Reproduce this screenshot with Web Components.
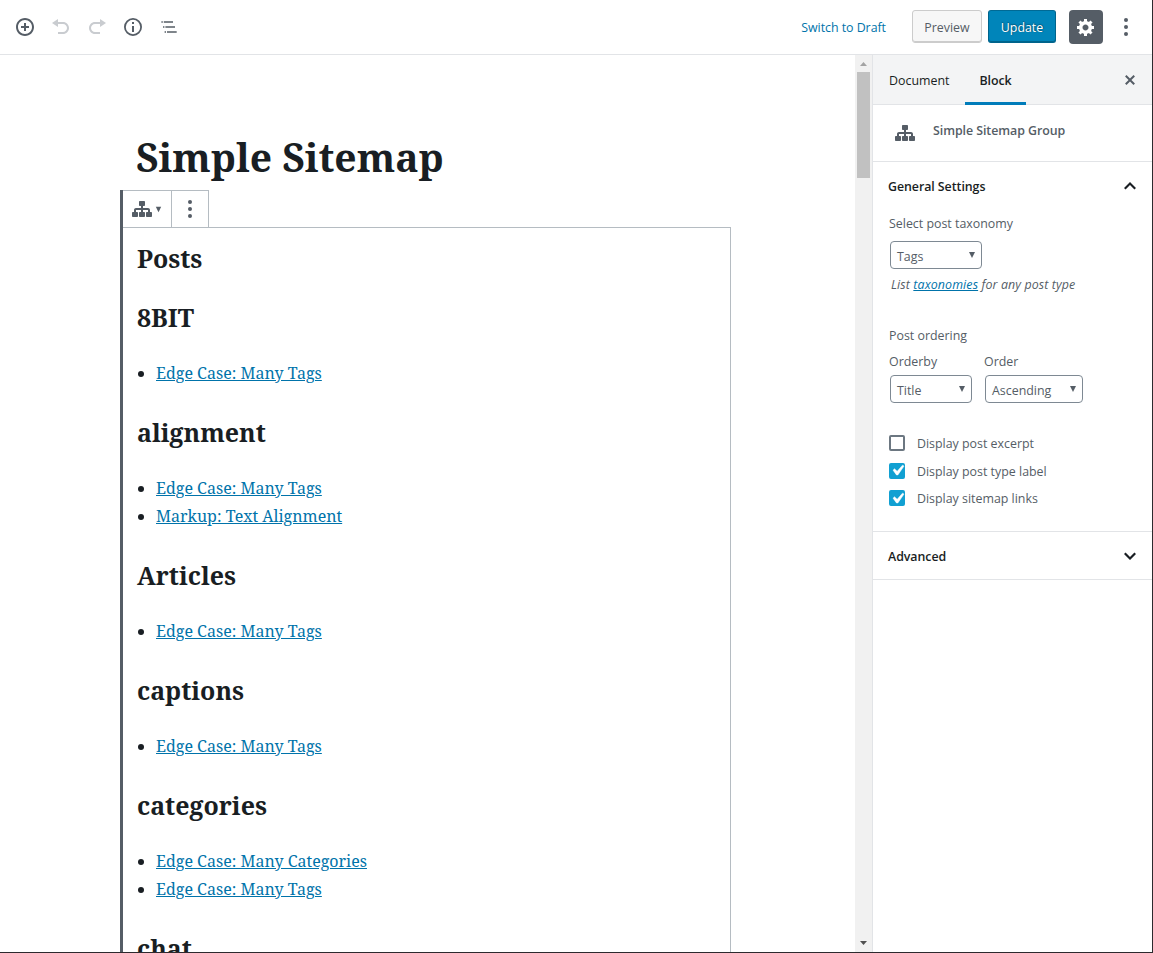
<!DOCTYPE html>
<html lang="en">
<head>
<meta charset="utf-8">
<title>Edit Page</title>
<style>
	html, body {
		margin: 0;
		height: 100%;
		overflow: hidden;
		background: #fff;
	}
	body {
		font-family: "Segoe UI", "Open Sans", sans-serif;
		font-size: 12.4px;
		color: #555d66;
	}
</style>
</head>
<body>
<editor-app>
	<editor-header slot="header"></editor-header>
	<editor-canvas slot="canvas" heading="Simple Sitemap">
		<sitemap-group label="Posts">
			<sitemap-section heading="8BIT">
				<sitemap-link>Edge Case: Many Tags</sitemap-link>
			</sitemap-section>
			<sitemap-section heading="alignment">
				<sitemap-link>Edge Case: Many Tags</sitemap-link>
				<sitemap-link>Markup: Text Alignment</sitemap-link>
			</sitemap-section>
			<sitemap-section heading="Articles">
				<sitemap-link>Edge Case: Many Tags</sitemap-link>
			</sitemap-section>
			<sitemap-section heading="captions">
				<sitemap-link>Edge Case: Many Tags</sitemap-link>
			</sitemap-section>
			<sitemap-section heading="categories">
				<sitemap-link>Edge Case: Many Categories</sitemap-link>
				<sitemap-link>Edge Case: Many Tags</sitemap-link>
			</sitemap-section>
			<sitemap-section heading="chat"></sitemap-section>
		</sitemap-group>
	</editor-canvas>
	<editor-sidebar slot="sidebar"></editor-sidebar>
</editor-app>

<script>
const icons = {
	insert: '<path d="M10 1c-5 0-9 4-9 9s4 9 9 9 9-4 9-9-4-9-9-9zm0 16c-3.9 0-7-3.1-7-7s3.1-7 7-7 7 3.1 7 7-3.1 7-7 7zm1-11H9v3H6v2h3v3h2v-3h3V9h-3V6z"/>',
	undo: '<path d="M12 5H7V2L1 6l6 4V7h5c2.2 0 4 1.8 4 4s-1.8 4-4 4H7v2h5c3.3 0 6-2.7 6-6s-2.7-6-6-6z"/>',
	redo: '<path d="M8 5h5V2l6 4-6 4V7H8c-2.2 0-4 1.8-4 4s1.8 4 4 4h5v2H8c-3.3 0-6-2.7-6-6s2.7-6 6-6z"/>',
	info: '<path d="M10 1a9 9 0 1 0 0 18 9 9 0 0 0 0-18zm0 16.2a7.2 7.2 0 1 1 0-14.4 7.2 7.2 0 0 1 0 14.4zM9 9h2v6H9zM9 5h2v2H9z"/>',
	outline: '<path d="M2.4 4.200h1.400v1.600H2.400zM4.800 4.200H14v1.600H4.800zM4 9.200h1.400v1.600H4zM6.400 9.200H16v1.600H6.400zM5.600 14.200H7v1.600H5.600zM8 14.200h9.700v1.600H8z"/>',
	gear: '<path d="M18 12h-2.18c-.17.7-.44 1.35-.81 1.93l1.54 1.54-2.1 2.1-1.54-1.54c-.58.36-1.23.63-1.91.79V19H8v-2.18c-.68-.16-1.33-.43-1.91-.79l-1.54 1.54-2.12-2.12 1.54-1.54c-.36-.58-.63-1.23-.79-1.91H1V9.03h2.17c.16-.7.44-1.35.8-1.94L2.43 5.55l2.1-2.1 1.54 1.54c.58-.37 1.24-.64 1.93-.81V2h3v2.18c.68.16 1.33.43 1.91.79l1.54-1.54 2.12 2.12-1.54 1.54c.36.59.64 1.24.8 1.94H18V12zm-8.5 1.5c1.66 0 3-1.34 3-3s-1.34-3-3-3-3 1.34-3 3 1.34 3 3 3z"/>',
	dots: '<circle cx="10" cy="3" r="2"/><circle cx="10" cy="10" r="2"/><circle cx="10" cy="17" r="2"/>',
	close: '<path d="M14.95 6.46L11.41 10l3.54 3.54-1.41 1.41L10 11.42l-3.53 3.53-1.42-1.42L8.58 10 5.05 6.47l1.42-1.42L10 8.58l3.54-3.53z"/>',
	sitemap: '<path d="M18 13h1c.55 0 1 .45 1 1.01v2.98c0 .56-.45 1.01-1 1.01h-4c-.55 0-1-.45-1-1.01v-2.98c0-.56.45-1.01 1-1.01h1v-2h-5v2h1c.55 0 1 .45 1 1.01v2.98c0 .56-.45 1.01-1 1.01H8c-.55 0-1-.45-1-1.01v-2.98c0-.56.45-1.01 1-1.01h1v-2H4v2h1c.55 0 1 .45 1 1.01v2.98C6 17.55 5.55 18 5 18H1c-.55 0-1-.45-1-1.01v-2.98C0 13.45.45 13 1 13h1v-2c0-1.1.9-2 2-2h5V7H8c-.55 0-1-.45-1-1.01V3.01C7 2.45 7.45 2 8 2h4c.55 0 1 .45 1 1.01v2.98C13 6.55 12.55 7 12 7h-1v2h5c1.1 0 2 .9 2 2v2z"/>',
	up: '<path d="M10 6.600l-5 5L6.300 12.900 10 9.200l3.700 3.700 1.300-1.300z"/>',
	down: '<path d="M10 13.400l-5-5L6.300 7.100 10 10.800l3.700-3.700L15 8.400z"/>',
	check: '<path d="M14.83 4.89l1.34.94-5.81 8.38H9.02L5.78 9.67l1.34-1.25 2.57 2.4z" stroke="currentColor" stroke-width=".5"/>',
	caret: '<path d="M4 4h12L10 16z"/>',
};

// Attaches an open shadow root holding the given markup.
function render(el, html) {
	el.attachShadow({mode: 'open'}).innerHTML = html;
}

class DashIcon extends HTMLElement {
	constructor() {
		super();
		this.attachShadow({mode: 'open'});
	}
	connectedCallback() {
		const size = this.getAttribute('size') || 20;
		this.shadowRoot.innerHTML = `
			<style>
				:host { display: block; flex: none; }
				svg { display: block; fill: currentColor; }
			</style>
			<svg width="${size}" height="${size}" viewBox="0 0 20 20">${icons[this.getAttribute('name')]}</svg>
		`;
	}
}

class EditorApp extends HTMLElement {
	constructor() {
		super();
		render(this, `
			<style>
				:host {
					display: grid;
					box-sizing: border-box;
					height: 953px;
					grid-template: 55px minmax(0, 1fr) / minmax(0, 1fr) 280px;
					border-right: 1px solid #2d2a2e;
					border-bottom: 1px solid #2d2a2e;
					overflow: hidden;
				}
				slot[name=header]::slotted(*) { grid-column: 1 / 3; }
			</style>
			<slot name="header"></slot>
			<slot name="canvas"></slot>
			<slot name="sidebar"></slot>
		`);
	}
}

class EditorHeader extends HTMLElement {
	constructor() {
		super();
		render(this, `
			<style>
				:host {
					display: flex;
					align-items: center;
					justify-content: space-between;
					box-sizing: border-box;
					padding: 0 16px 0 15px;
					border-bottom: 1px solid #e2e4e7;
				}
				.tools { display: flex; gap: 16px; }
				.off { color: #c9ccd0; }
				.actions { display: flex; align-items: center; }
				.draft { color: #0073aa; margin-right: 26px; letter-spacing: -.04px; }
				.button {
					box-sizing: border-box;
					height: 33px;
					line-height: 34px;
					margin-bottom: 1px;
					border: 1px solid #ccc;
					border-radius: 3px;
					text-align: center;
				}
				.preview { width: 70px; background: #f7f7f7; box-shadow: inset 0 -1px 0 #ccc; margin-right: 6px; }
				.update {
					width: 68px;
					color: #fff;
					background: #0085ba;
					border-color: #006a95 #00648c #00648c;
					box-shadow: inset 0 -1px 0 #00648c;
					text-shadow: 0 -1px 1px #005d82, 1px 0 1px #005d82;
					margin-right: 13px;
				}
				.settings {
					display: grid;
					place-items: center;
					width: 34px;
					height: 34px;
					border-radius: 4px;
					background: #555d66;
					color: #fff;
					margin-right: 13px;
				}
			</style>
			<div class="tools">
				<dash-icon name="insert"></dash-icon>
				<dash-icon class="off" name="undo"></dash-icon>
				<dash-icon class="off" name="redo"></dash-icon>
				<dash-icon name="info"></dash-icon>
				<dash-icon name="outline"></dash-icon>
			</div>
			<div class="actions">
				<span class="draft">Switch to Draft</span>
				<div class="button preview">Preview</div>
				<div class="button update">Update</div>
				<div class="settings"><dash-icon name="gear"></dash-icon></div>
				<dash-icon name="dots"></dash-icon>
			</div>
		`);
	}
}

class EditorCanvas extends HTMLElement {
	constructor() {
		super();
		render(this, `
			<style>
				:host {
					display: flex;
					overflow: hidden;
					font-family: "Noto Serif", "DejaVu Serif Condensed", "DejaVu Serif", serif;
					font-size: 16px;
					color: #191e23;
				}
				main { flex: 1; padding: 74px 124px 0 120px; }
				h1 {
					margin: 0 0 6px 16px;
					height: 55px;
					font-size: 39.04px;
					line-height: 55px;
					font-weight: bold;
					white-space: nowrap;
				}
				.bar {
					display: flex;
					flex-direction: column;
					justify-content: space-between;
					width: 17px;
					background: #f1f1f1;
				}
				.arrow { display: grid; place-items: center; height: 17px; }
				.arrow.down { height: 19px; }
				.thumb { width: 13px; height: 106px; margin: 0 auto auto; background: #c1c1c1; }
				svg { display: block; }
			</style>
			<main>
				<h1>${this.getAttribute('heading')}</h1>
				<slot></slot>
			</main>
			<div class="bar">
				<div class="arrow"><svg width="7" height="4"><path d="M0 4L3.5 0 7 4z" fill="#a3a3a3"/></svg></div>
				<div class="thumb"></div>
				<div class="arrow down"><svg width="7" height="4"><path d="M0 0h7L3.5 4z" fill="#505050"/></svg></div>
			</div>
		`);
	}
}

class SitemapGroup extends HTMLElement {
	constructor() {
		super();
		render(this, `
			<style>
				:host { display: block; border-left: 3px solid #555d66; }
				.toolbar {
					display: flex;
					width: 86px;
					height: 37px;
					box-sizing: border-box;
					border: 1px solid #b5bcc2;
					border-width: 1px 1px 0 0;
					color: #555d66;
				}
				.type, .more { display: flex; align-items: center; justify-content: center; }
				.type { width: 48px; gap: 2px; border-right: 1px solid #b5bcc2; }
				.more { flex: 1; }
				.content {
					height: 760px;
					padding: 13px 14px 0;
					border: 1px solid #b5bcc2;
					border-width: 1px 1px 0 0;
				}
				h2 { margin: 0 0 25px; font-size: 24.96px; line-height: 34px; }
			</style>
			<div class="toolbar">
				<div class="type"><dash-icon name="sitemap"></dash-icon><dash-icon name="caret" size="9"></dash-icon></div>
				<div class="more"><dash-icon name="dots"></dash-icon></div>
			</div>
			<div class="content">
				<h2>${this.getAttribute('label')}</h2>
				<slot></slot>
			</div>
		`);
	}
}

class SitemapSection extends HTMLElement {
	constructor() {
		super();
		render(this, `
			<style>
				:host { display: block; margin-bottom: 28px; }
				h2 { margin: 0 0 25px; font-size: 24.96px; line-height: 34px; }
			</style>
			<h2>${this.getAttribute('heading')}</h2>
			<slot></slot>
		`);
	}
}

class SitemapLink extends HTMLElement {
	constructor() {
		super();
		render(this, `
			<style>
				:host { display: flex; align-items: center; height: 28px; line-height: 28px; }
				i { width: 6px; height: 6px; margin: 1px 12px 0 1px; border-radius: 50%; background: #191e23; }
				a { color: #0073aa; text-decoration: underline; white-space: nowrap; }
			</style>
			<i></i><a><slot></slot></a>
		`);
	}
}

class EditorSidebar extends HTMLElement {
	constructor() {
		super();
		render(this, `
			<style>
				:host { display: block; border-left: 1px solid #e2e4e7; }
				.tabs {
					display: flex;
					height: 49px;
					background: #f3f4f5;
					border-bottom: 1px solid #e2e4e7;
					color: #191e23;
					line-height: 52px;
				}
				.tab { box-sizing: border-box; width: 92px; height: 50px; padding-left: 16px; }
				.tab.active { width: 61px; padding-left: 14.500px; font-weight: 600; letter-spacing: -.1px; border-bottom: 3px solid #007cba; }
				.tabs dash-icon { margin: 15px 12px 0 auto; color: #555d66; }
				.card {
					display: flex;
					align-items: center;
					gap: 18px;
					height: 56px;
					padding-left: 22px;
					border-bottom: 1px solid #e2e4e7;
					font-weight: 600;
					letter-spacing: -.06px;
				}
				.card span { margin-bottom: 5px; }
				.field { padding: 1px 0 0 16px; line-height: 20px; }
				.taxonomy { --label-gap: 7px; width: 93px; }
				.hint { margin: 6px 0 31px 2px; font-style: italic; letter-spacing: .12px; }
				.hint a { color: #0073aa; text-decoration: underline; }
				.row { display: flex; gap: 12px; margin: 6px 0 26.3px; }
			</style>
			<div class="tabs">
				<div class="tab">Document</div>
				<div class="tab active">Block</div>
				<dash-icon name="close"></dash-icon>
			</div>
			<div class="card"><dash-icon name="sitemap"></dash-icon><span>Simple Sitemap Group</span></div>
			<settings-panel heading="General Settings" icon="up" style="height: 369px">
				<div class="field">
					<select-field class="taxonomy" label="Select post taxonomy" value="Tags"></select-field>
					<div class="hint">List <a>taxonomies</a> for any post type</div>
					<div>Post ordering</div>
					<div class="row">
						<select-field label="Orderby" value="Title" style="width: 83px"></select-field>
						<select-field label="Order" value="Ascending" style="width: 99px"></select-field>
					</div>
					<check-field>Display post excerpt</check-field>
					<check-field checked>Display post type label</check-field>
					<check-field checked>Display sitemap links</check-field>
				</div>
			</settings-panel>
			<settings-panel heading="Advanced" icon="down" style="height: 47px"></settings-panel>
		`);
	}
}

class SettingsPanel extends HTMLElement {
	constructor() {
		super();
		this.attachShadow({mode: 'open'});
	}
	connectedCallback() {
		this.shadowRoot.innerHTML = `
			<style>
				:host { display: block; border-bottom: 1px solid #e2e4e7; }
				header {
					display: flex;
					align-items: center;
					justify-content: space-between;
					height: 48px;
					margin-bottom: 3px;
					padding: 0 10px 0 15px;
					color: #191e23;
					font-weight: 600;
					letter-spacing: -.06px;
				}
			</style>
			<header><span>${this.getAttribute('heading')}</span><dash-icon name="${this.getAttribute('icon')}" size="24"></dash-icon></header>
			<slot></slot>
		`;
	}
}

class SelectField extends HTMLElement {
	constructor() {
		super();
		this.attachShadow({mode: 'open'});
	}
	connectedCallback() {
		this.shadowRoot.innerHTML = `
			<style>
				:host { display: block; white-space: nowrap; }
				.box {
					display: flex;
					align-items: center;
					justify-content: space-between;
					box-sizing: border-box;
					height: 28px;
					margin: var(--label-gap, 3px) 0 0 1px;
					padding: 3px 4px 0 6px;
					border: 1px solid #7e8993;
					border-radius: 4px;
				}
				dash-icon { margin-bottom: 4px; }
			</style>
			<div>${this.getAttribute('label')}</div>
			<div class="box"><span>${this.getAttribute('value')}</span><dash-icon name="caret" size="10"></dash-icon></div>
		`;
	}
}

class CheckField extends HTMLElement {
	constructor() {
		super();
		render(this, `
			<style>
				:host { display: flex; align-items: center; height: 27.5px; }
				.box {
					display: grid;
					place-items: center;
					box-sizing: border-box;
					width: 16px;
					height: 16px;
					margin-right: 12px;
					border: 2px solid #6c7781;
					border-radius: 2px;
				}
				.label { padding-top: 2px; }
				dash-icon { display: none; margin: -5px; color: #fff; }
				:host([checked]) .box { background: #11a0d2; border-color: #11a0d2; }
				:host([checked]) dash-icon { display: block; }
			</style>
			<span class="box"><dash-icon name="check" size="21"></dash-icon></span>
			<span class="label"><slot></slot></span>
		`);
	}
}

customElements.define('dash-icon', DashIcon);
customElements.define('select-field', SelectField);
customElements.define('check-field', CheckField);
customElements.define('settings-panel', SettingsPanel);
customElements.define('sitemap-link', SitemapLink);
customElements.define('sitemap-section', SitemapSection);
customElements.define('sitemap-group', SitemapGroup);
customElements.define('editor-header', EditorHeader);
customElements.define('editor-canvas', EditorCanvas);
customElements.define('editor-sidebar', EditorSidebar);
customElements.define('editor-app', EditorApp);
</script>
</body>
</html>
